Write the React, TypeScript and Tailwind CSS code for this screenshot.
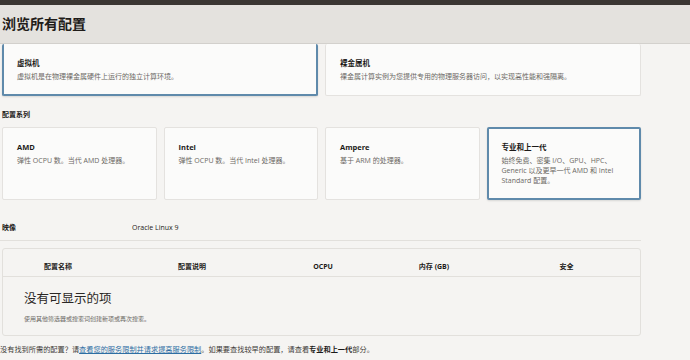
import React from "react";

const FONT = { fontFamily: '"Open Sans", "Noto Sans CJK SC", sans-serif' };

function Card({ title, lines, selected, topCut }: { title: string; lines: string[]; selected?: boolean; topCut?: boolean }) {
  const border = selected
    ? "border-2 border-[#5f8aab] px-[13px] pb-[12px]"
    : "border border-[#e4e2df] px-[14px] pb-[13px]";
  const top = topCut ? "border-t-0 pt-[14px]" : selected ? "pt-[13px]" : "pt-[14px]";
  return (
    <div className={`bg-[#fbfbfa] rounded-[2px] ${border} ${top} ${selected ? "shadow-[0_1px_2px_rgba(0,0,0,0.12)]" : ""}`}>
      <div className="text-[7.5px] leading-[10px] font-bold text-[#1c1a18]">{title}</div>
      <div className="mt-[4px] text-[7px] leading-[10px] text-[#6b6864]">
        {lines.map((l, i) => (
          <div key={i}>{l}</div>
        ))}
      </div>
    </div>
  );
}

export default function App() {
  return (
    <div className="w-[690px] h-[360px] bg-[#f5f4f2] overflow-hidden" style={FONT}>
      <div className="h-[5px] bg-[#3a3632]" />
      <div className="h-[39px] bg-[#e4e2de] border-b border-[#d3d1cd] flex items-center pl-[2px]">
        <h1 className="text-[14px] font-bold text-[#1f1c19] leading-none">浏览所有配置</h1>
      </div>
      <div className="w-[639px] ml-[2px]">
        <div className="grid grid-cols-2 gap-[7px]">
          <Card topCut selected title="虚拟机" lines={["虚拟机是在物理裸金属硬件上运行的独立计算环境。"]} />
          <Card topCut title="裸金属机" lines={["裸金属计算实例为您提供专用的物理服务器访问，以实现高性能和强隔离。"]} />
        </div>
        <div className="mt-[14px] text-[7px] leading-[10px] font-bold text-[#1c1a18]">配置系列</div>
        <div className="mt-[7px] grid grid-cols-4 gap-[7px]">
          <Card title="AMD" lines={["弹性 OCPU 数。当代 AMD 处理器。"]} />
          <Card title="Intel" lines={["弹性 OCPU 数。当代 Intel 处理器。"]} />
          <Card title="Ampere" lines={["基于 ARM 的处理器。"]} />
          <Card selected title="专业和上一代" lines={["始终免费、密集 I/O、GPU、HPC、", "Generic 以及更早一代 AMD 和 Intel", "Standard 配置。"]} />
        </div>
        <div className="mt-[23px] flex text-[7px] leading-[10px] text-[#1c1a18]">
          <div className="w-[130px] font-bold">映像</div>
          <div>Oracle Linux 9</div>
        </div>
        <div className="mt-[7px] -ml-[2px] w-[641px] border-t border-[#e2e0dc]" />
        <div className="mt-[7px] border border-[#e2e0dc] rounded-[3px]">
          <div className="grid grid-cols-[110px_158px_104px_118px_147px] border-b border-[#e2e0dc] pt-[13px] pb-[4px] text-[7px] leading-[10px] font-bold text-[#1c1a18] text-center">
            <div>配置名称</div>
            <div>配置说明</div>
            <div>OCPU</div>
            <div>内存 (GB)</div>
            <div>安全</div>
          </div>
          <div className="pl-[21px] pt-[14px] pb-[12px]">
            <div className="text-[12.5px] leading-[16px] text-[#2a2725]">没有可显示的项</div>
            <div className="mt-[8px] text-[6px] leading-[8px] text-[#6b6864]">使用其他筛选器或搜索词创建新项或再次搜索。</div>
          </div>
        </div>
        <div className="mt-[8px] -ml-[2px] text-[7.2px] leading-[10px] text-[#3d3a37] whitespace-nowrap">
          没有找到所需的配置？请
          <span className="text-[#2d6ea3] underline">查看您的服务限制并请求提高服务限制</span>
          。如果要查找较早的配置，请查看<span className="font-bold text-[#1c1a18]">专业和上一代</span>部分。
        </div>
      </div>
    </div>
  );
}
